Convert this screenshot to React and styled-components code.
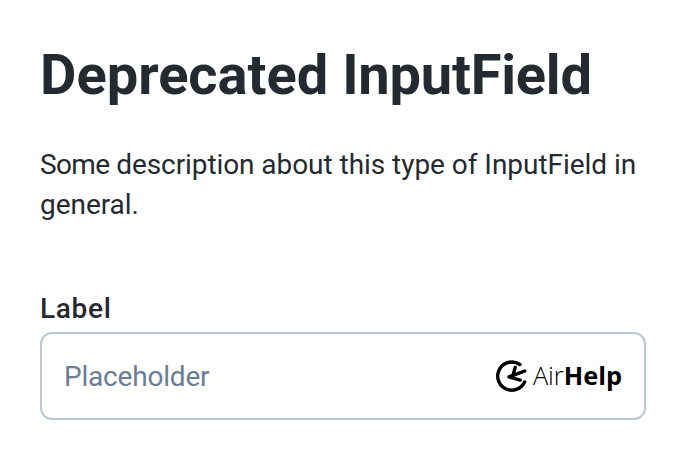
import React from 'react';
import styled, { createGlobalStyle } from 'styled-components';

const GlobalStyle = createGlobalStyle`
  * { box-sizing: border-box; }
  body { margin: 0; background: #fff; color: #252a31; font-family: Roboto, sans-serif; }
`;
const Page = styled.main`
  padding: 39px 40px 40px;
`;
const Title = styled.h1`
  margin: 0;
  font-size: 56px;
  line-height: 72px;
  font-weight: 700;
  white-space: nowrap;
`;
const Description = styled.p`
  margin: 34px 0 0;
  font-size: 28px;
  line-height: 40px;
  letter-spacing: -0.04px;
`;
const Tracked = styled.span`
  letter-spacing: ${({ $spacing }) => $spacing}px;
`;
const Field = styled.label`
  display: block;
  margin-top: 64px;
`;
const Label = styled.span`
  display: block;
  margin-bottom: 3px;
  font-size: 28px;
  line-height: 40px;
  font-weight: 500;
  letter-spacing: 0.7px;
`;
const InputBox = styled.span`
  display: flex;
  align-items: center;
  height: 88px;
  padding: 0 22px;
  border: 2px solid #bac7d5;
  border-radius: 12px;
`;
const Input = styled.input`
  flex: 1;
  min-width: 0;
  padding: 2px 0 0;
  border: 0;
  outline: 0;
  background: transparent;
  font: 400 28px/40px Roboto, sans-serif;
  letter-spacing: -0.2px;
  &::placeholder { color: #697d95; opacity: 1; }
`;
const Brand = styled.span`
  display: flex;
  align-items: center;
  gap: 5px;
  color: #000;
`;
const Mark = styled.svg`
  display: block;
  width: 32px;
  height: 32px;
`;
const BrandName = styled.span`
  margin-top: -3px;
  font: 300 25.4px/32px "Open Sans", sans-serif;
  b { font-weight: 700; }
`;

export default function App() {
  return (
    <Page>
      <GlobalStyle />
      <Title>Deprecated <Tracked $spacing={-0.22}>InputField</Tracked></Title>
      <Description>
        <Tracked $spacing={-0.65}>Some</Tracked>{' '}
        <Tracked $spacing={-0.1}>description</Tracked>{' '}
        about this type of InputField in general.
      </Description>
      <Field>
        <Label>Label</Label>
        <InputBox>
          <Input placeholder="Placeholder" />
          <Brand>
            <Mark viewBox="0 0 32 32" fill="none" stroke="currentColor" strokeWidth="3.4" strokeLinecap="round" strokeLinejoin="round">
              <path d="M23.9 4.5A14.1 14.1 0 1 0 28.6 22" />
              <path d="M28.7 11L13 16.9L24.2 20.1M19.2 7.5L17 15" />
            </Mark>
            <BrandName>Air<b>Help</b></BrandName>
          </Brand>
        </InputBox>
      </Field>
    </Page>
  );
}
